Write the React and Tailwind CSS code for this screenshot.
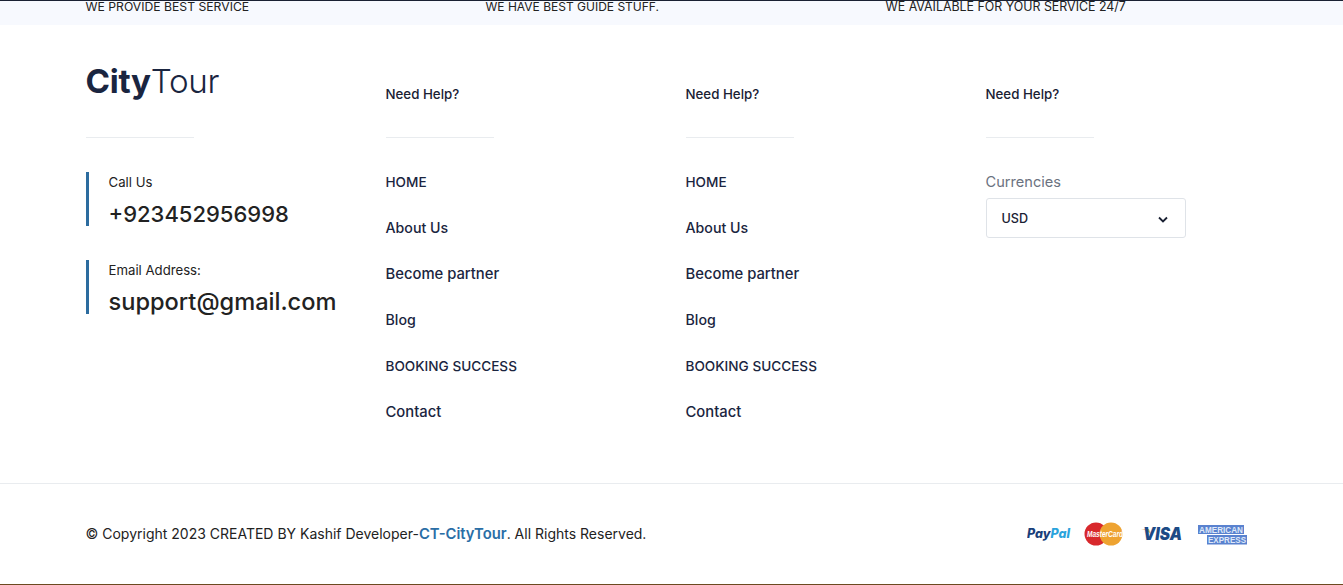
const font = { fontFamily: "Inter, 'Noto Sans', sans-serif" };

const links = [
  ["HOME", "text-[13.6px]"],
  ["About Us", "text-[14.2px]"],
  ["Become partner", "text-[14.8px]"],
  ["Blog", "text-[14.2px]"],
  ["BOOKING SUCCESS", "text-[13.6px]"],
  ["Contact", "text-[14.8px]"],
];

const top = [
  ["WE PROVIDE BEST SERVICE", "text-[12.2px]"],
  ["WE HAVE BEST GUIDE STUFF.", "text-[12px]"],
  ["WE AVAILABLE FOR YOUR SERVICE 24/7", "text-[12.4px]"],
];

function Heading() {
  return (
    <>
      <div className="h-[112px] pt-[59px] text-[13.3px] leading-[20px] font-medium text-[#1a2133]">Need Help?</div>
      <div className="h-px w-[108px] bg-[#e9ecef]" />
    </>
  );
}

function LinkCol() {
  return (
    <div className="w-[300px] shrink-0">
      <Heading />
      <ul className="mt-[34px] flex flex-col gap-[26px]">
        {links.map(([l, size]) => (
          <li key={l} className={`${size} leading-[20px] font-medium text-[#1a2540]`}>{l}</li>
        ))}
      </ul>
    </div>
  );
}

function Contact({ label, value, size }) {
  return (
    <div className="h-[54px] border-l-[3px] border-[#2c6c9f] pl-[20px]">
      <div className="text-[13.2px] leading-[20px] text-[#222]">{label}</div>
      <div className={`mt-[6px] ${size} leading-[32px] font-medium text-[#222]`}>{value}</div>
    </div>
  );
}

function Payments() {
  return (
    <div className="flex items-center">
      <svg width="220" height="26" viewBox="0 0 220 26">
        <text x="0" y="17" fontFamily="Inter, sans-serif" fontWeight="800" fontStyle="italic" fontSize="12.5" textLength="43" lengthAdjust="spacingAndGlyphs" fill="#1a3f7a">Pay<tspan fill="#2aa3dc">Pal</tspan></text>
        <circle cx="69" cy="13" r="11.5" fill="#d8282c" />
        <circle cx="84" cy="13" r="11.5" fill="#eea331" />
        <text x="60" y="16" fontFamily="'Liberation Sans', sans-serif" fontWeight="700" fontStyle="italic" fontSize="8.5" textLength="36" lengthAdjust="spacingAndGlyphs" fill="#fff">MasterCard</text>
        <path d="M114 8 L122 8 L125 15 Q121 9 114 8 Z" fill="#e9bd7a" />
        <text x="116" y="19" fontFamily="Inter, sans-serif" fontWeight="900" fontStyle="italic" fontSize="17" textLength="39" lengthAdjust="spacingAndGlyphs" fill="#1c4a85">VISA</text>
        <rect x="171" y="4" width="46" height="9" fill="#5a82cf" />
        <rect x="180" y="14" width="40" height="9.5" fill="#5a82cf" />
        <text x="172" y="11.5" fontFamily="'Liberation Sans', sans-serif" fontWeight="700" fontSize="8.5" textLength="44" lengthAdjust="spacingAndGlyphs" fill="#dfe8f9">AMERICAN</text>
        <text x="181" y="21.8" fontFamily="'Liberation Sans', sans-serif" fontWeight="700" fontSize="8.5" textLength="38" lengthAdjust="spacingAndGlyphs" fill="#dfe8f9">EXPRESS</text>
      </svg>
    </div>
  );
}

export default function App() {
  return (
    <div className="h-[585px] w-full overflow-hidden bg-white border-b border-[#6b4a20] flex flex-col" style={font}>
      <div className="h-[25px] shrink-0 border-t border-[#1a2133] bg-[#f7f9fe] pl-[85.5px] flex">
        {top.map(([t, size]) => (
          <div key={t} className={`w-[400px] shrink-0 ${size} leading-[11px] text-[#222]`}>{t}</div>
        ))}
      </div>

      <div className="h-[458px] shrink-0 pl-[85.5px] flex">
        <div className="w-[300px] shrink-0">
          <div className="h-[112px] pt-[34px] text-[33.2px] leading-[44px] text-[#1a2540] tracking-[-0.3px]">
            <span className="font-bold">City</span><span className="font-light">Tour</span>
          </div>
          <div className="h-px w-[108px] bg-[#e9ecef]" />
          <div className="mt-[34px] flex flex-col gap-[34px]">
            <Contact label="Call Us" value="+923452956998" size="text-[22px]" />
            <Contact label="Email Address:" value="support@gmail.com" size="text-[23.6px]" />
          </div>
        </div>
        <LinkCol />
        <LinkCol />
        <div className="w-[300px] shrink-0">
          <Heading />
          <div className="mt-[34px] text-[14.6px] leading-[20px] text-[#6b7280]">Currencies</div>
          <div className="mt-[6px] h-[40px] w-[200px] rounded-[3px] border border-[#dfe3e8] pl-[15px] pr-[17px] pt-[2px] flex items-center justify-between text-[12.6px] font-medium text-[#1a2133]">
            <span>USD</span>
            <svg width="10" height="7" viewBox="0 0 10 7" fill="none">
              <path d="M1 1.5 L5 5.5 L9 1.5" stroke="#1a2133" strokeWidth="1.8" />
            </svg>
          </div>
        </div>
      </div>

      <div className="flex-1 border-t border-[#e9ecef] pl-[85.5px] pr-[96px] flex items-center justify-between">
        <div className="text-[14px] text-[#222]">
          © Copyright 2023 CREATED BY Kashif Developer-<span className="text-[14.8px] font-semibold text-[#2a6ea6]">CT-CityTour</span>. All Rights Reserved.
        </div>
        <Payments />
      </div>
    </div>
  );
}
